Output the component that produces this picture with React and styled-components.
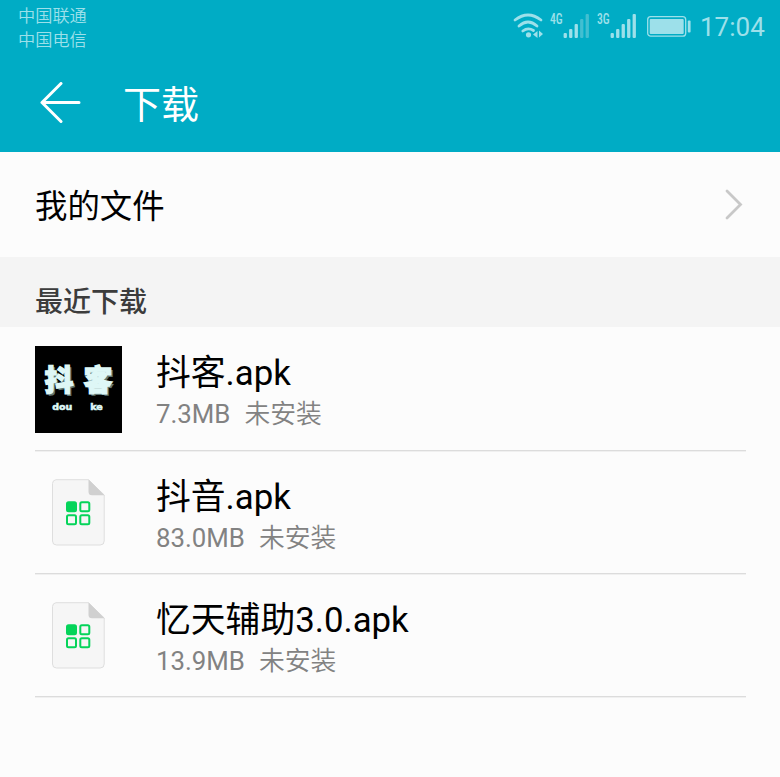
import React from "react";
import styled, { createGlobalStyle } from "styled-components";

const GlobalStyle = createGlobalStyle`
  * { box-sizing: border-box; }
  body {
    margin: 0;
    background: #fcfcfc;
    font-family: Roboto, "Noto Sans CJK SC", sans-serif;
  }
`;

const Screen = styled.main`
  width: 780px;
  height: 777px;
  overflow: hidden;
  background: #fcfcfc;
`;

const Header = styled.header`
  height: 152px;
  background: #00acc5;
  color: #fff;
`;

const StatusBar = styled.div`
  display: flex;
  justify-content: space-between;
  height: 54px;
  padding: 4px 16px 0 18px;
  color: #9de0ea;
`;

const Carriers = styled.div`
  padding-top: 1px;
  font-size: 17.2px;
  font-weight: 350;
  line-height: 23.5px;
`;

const StatusIcons = styled.div`
  display: flex;
  height: 46px;
`;

const Clock = styled.time`
  margin-left: 8px;
  width: 64px;
  font-size: 26px;
  line-height: 47px;
  white-space: nowrap;
`;

const TitleBar = styled.div`
  display: flex;
  align-items: center;
  height: 98px;
  padding-left: 39px;
`;

const Title = styled.h1`
  margin: 4px 0 0 42px;
  font-size: 38px;
  font-weight: 400;
  line-height: 60px;
`;

const FilesLink = styled.div`
  display: flex;
  align-items: center;
  justify-content: space-between;
  height: 105px;
  padding: 0 37px 2px 35px;
  font-size: 32.4px;
  color: #000;
`;

const SectionTitle = styled.h2`
  height: 70px;
  margin: 0;
  padding: 12px 35px 0;
  background: #f4f4f4;
  color: #3c3c3c;
  font-size: 28px;
  font-weight: 500;
  line-height: 68px;
`;

const List = styled.ul`
  margin: 0;
  padding: 0 34px 0 35px;
  list-style: none;
`;

const Item = styled.li`
  display: flex;
  align-items: center;
  height: 123px;
  border-bottom: 1px solid #dcdcdc;
  box-shadow: 0 1px 0 #f0f0f0;
  &:first-child { height: 124px; }
`;

const IconSlot = styled.div`
  display: flex;
  justify-content: center;
  width: 87px;
  margin-right: 34px;
`;

const Details = styled.div`
  flex: 1;
  padding-top: 7px;
`;

const FileName = styled.div`
  font-size: 34.8px;
  line-height: 44px;
  color: #000;
`;

const Meta = styled.div`
  display: flex;
  gap: 14px;
  font-size: 25.8px;
  line-height: 38px;
  color: #828282;
`;

const State = styled.span`
  font-weight: 350;
`;

const Cover = styled.div`
  width: 87px;
  height: 87px;
  margin-top: 1px;
  padding-top: 18px;
  background: #000;
  color: #def7f6;
  text-align: center;
`;

const CoverTitle = styled.div`
  display: flex;
  justify-content: center;
  gap: 10px;
  font-size: 29px;
  font-weight: 900;
  line-height: 34px;
  -webkit-text-stroke: 1.3px #def7f6;
  text-shadow: 2px 2px 0 #607674;
`;

const CoverLatin = styled.div`
  display: flex;
  justify-content: center;
  gap: 18px;
  padding-right: 2px;
  font-family: "DejaVu Sans", sans-serif;
  font-size: 9.5px;
  font-weight: 700;
  line-height: 18px;
  -webkit-text-stroke: 0.6px #def7f6;
`;

const WifiIcon = () => (
  <svg width="30" height="46" viewBox="514 4 30 46" fill="none" stroke="#9de0ea" strokeWidth="2.8" strokeLinecap="round">
    <path d="M516 20Q529 10 542 20M520 26Q529 18 538 26M523.800 31Q529 27 534.500 30.500" />
    <circle cx="529.500" cy="34.800" r="2.600" fill="#9de0ea" stroke="none" />
    <path d="M538.500 31v7l-4.500-3.500zM540 30.500v7l4-3.500z" fill="#9de0ea" stroke="none" />
  </svg>
);

const Signal = styled.div`
  display: flex;
  margin-left: ${(p) => p.$gap}px;
`;

const Network = styled.span`
  width: 13px;
  font-family: "Roboto Condensed", Roboto, sans-serif;
  font-size: 15px;
  font-weight: 500;
  line-height: 31px;
  transform: scaleX(0.78);
  transform-origin: left;
`;

const SignalBars = ({ active }) => (
  <svg width="26" height="46" viewBox="0 4 26 46">
    {[5, 9, 14, 19, 24].map((height, i) => (
      <rect key={height} x={0.6 + i * 5.5} y={38 - height} width="3.300" height={height} rx="1" fill={i < active ? "#9de0ea" : "#42bfd1"} />
    ))}
  </svg>
);

const Battery = styled.svg`
  margin-left: 11px;
`;

const BackIcon = () => (
  <svg width="42" height="42" viewBox="0 0 42 42" fill="none" stroke="#fff" strokeWidth="3" strokeLinecap="round" strokeLinejoin="round">
    <path d="M22 1.500 3 20.500 22 39.500M3 20.500H40" />
  </svg>
);

const Chevron = () => (
  <svg width="18" height="32" viewBox="0 0 18 32" fill="none" stroke="#c8c8c8" strokeWidth="2.800" strokeLinecap="round">
    <path d="M2 3 15.500 16.500 2 30" />
  </svg>
);

const ApkIcon = () => (
  <svg width="53" height="67" viewBox="0 0 53 67">
    <path d="M4 .7H36.500L52.200 16V62a4 4 0 0 1-4 4H4.500a4 4 0 0 1-4-4V4.500a4 4 0 0 1 3.500-3.800z" fill="#f6f6f6" stroke="#dedede" />
    <path d="M36.500.5 52.500 16.200H40a3.500 3.500 0 0 1-3.500-3.500z" fill="#d0d0d0" />
    <g fill="none" stroke="#05d45a" strokeWidth="2">
      <rect x="15" y="23.300" width="9" height="9" rx="1.500" fill="#05d45a" />
      <rect x="28.300" y="23.300" width="9" height="9" rx="1.500" />
      <rect x="15" y="36.300" width="9" height="9" rx="1.500" />
      <rect x="28.300" y="36.300" width="9" height="9" rx="1.500" />
    </g>
  </svg>
);

const DoukeCover = () => (
  <Cover>
    <CoverTitle><span>抖</span><span>客</span></CoverTitle>
    <CoverLatin><span>dou</span><span>ke</span></CoverLatin>
  </Cover>
);

const files = [
  { name: "抖客.apk", size: "7.3MB", Icon: DoukeCover },
  { name: "抖音.apk", size: "83.0MB", Icon: ApkIcon },
  { name: "忆天辅助3.0.apk", size: "13.9MB", Icon: ApkIcon },
];

export default function App() {
  return (
    <Screen>
      <GlobalStyle />
      <Header>
        <StatusBar>
          <Carriers>
            <div>中国联通</div>
            <div>中国电信</div>
          </Carriers>
          <StatusIcons>
            <WifiIcon />
            <Signal $gap={7}><Network>4G</Network><SignalBars active={3} /></Signal>
            <Signal $gap={8}><Network>3G</Network><SignalBars active={5} /></Signal>
            <Battery width="45" height="46" viewBox="0 4 45 46">
              <rect x=".700" y="16.700" width="38" height="19.500" rx="3" fill="none" stroke="#9de0ea" strokeWidth="1.300" />
              <rect x="2.700" y="19" width="34" height="15" rx="1" fill="#9de0ea" />
              <rect x="40.800" y="20.500" width="2.800" height="12" rx="1" fill="#9de0ea" />
            </Battery>
            <Clock>17:04</Clock>
          </StatusIcons>
        </StatusBar>
        <TitleBar>
          <BackIcon />
          <Title>下载</Title>
        </TitleBar>
      </Header>
      <FilesLink>
        <span>我的文件</span>
        <Chevron />
      </FilesLink>
      <SectionTitle>最近下载</SectionTitle>
      <List>
        {files.map(({ name, size, Icon }) => (
          <Item key={name}>
            <IconSlot><Icon /></IconSlot>
            <Details>
              <FileName>{name}</FileName>
              <Meta><span>{size}</span><State>未安装</State></Meta>
            </Details>
          </Item>
        ))}
      </List>
    </Screen>
  );
}
